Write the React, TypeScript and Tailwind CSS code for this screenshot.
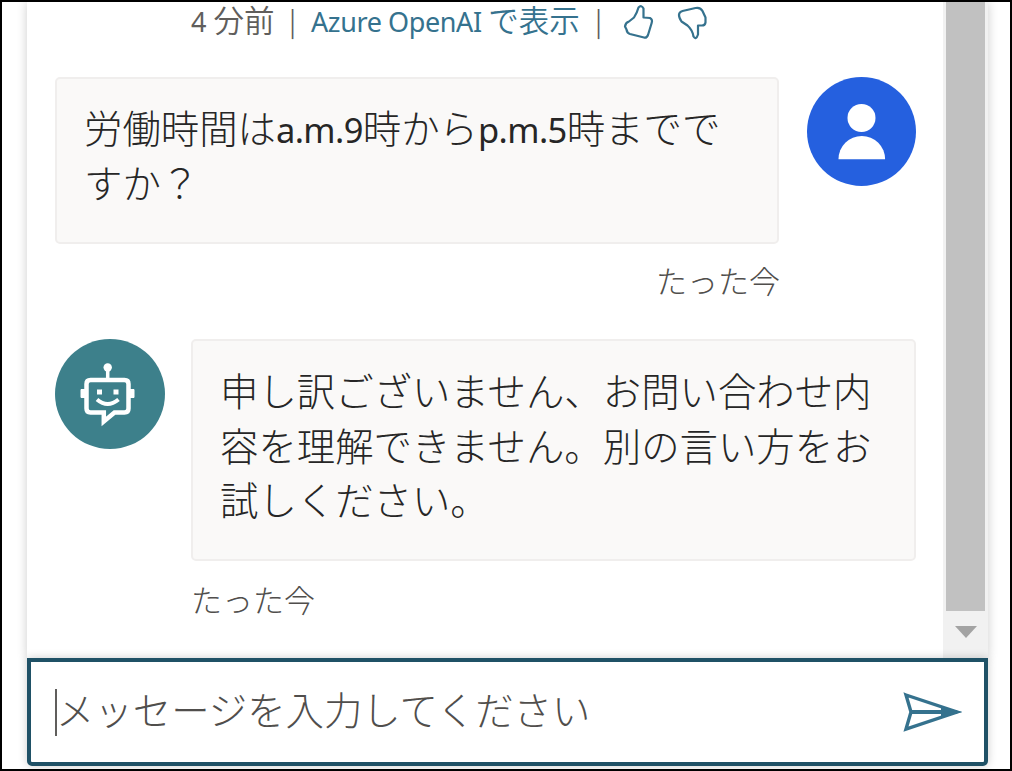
import type { ReactNode } from 'react';

const Latin = ({ children }: { children: ReactNode }) => (
  <span className="font-['Noto_Sans',sans-serif] font-normal text-[34.5px] leading-none tracking-[-0.6px]">{children}</span>
);

function UserAvatar() {
  return (
    <div className="size-[109px] shrink-0 rounded-full bg-[#2560df]">
      <svg viewBox="0 0 109 109" className="size-full" fill="#fff">
        <circle cx="54.5" cy="41" r="14" />
        <path d="M31.5 82.2a23.3 23.3 0 0 1 46.6 0z" />
      </svg>
    </div>
  );
}

function BotAvatar() {
  return (
    <div className="size-[110px] shrink-0 rounded-full bg-[#3d808b]">
      <svg viewBox="0 0 110 110" className="size-full" fill="none" stroke="#fff">
        <circle cx="52.7" cy="28.5" r="4.2" fill="#fff" stroke="none" />
        <path d="M52.7 30v11" strokeWidth="3.5" />
        <path d="M35.5 41H69.5q4 0 4 4V69.5q0 4-4 4H59.5L48.8 82.5V73.5H35.5q-4 0-4-4V45q0-4 4-4z" strokeWidth="4.5" />
        <path d="M26 50.5h4v8h-4zM75 50.5h4v8h-4z" fill="#fff" strokeWidth="1" />
        <path d="M42 50.5h5v5h-5zM58.5 50.5h5v5h-5z" fill="#fff" stroke="none" />
        <path d="M42 60.5q10.5 9 21.5 0" strokeWidth="4" />
      </svg>
    </div>
  );
}

function Feedback() {
  return (
    <svg width="90" height="38" viewBox="0 0 90 38" fill="none" stroke="#35728e" strokeWidth="2.2" strokeLinejoin="round" strokeLinecap="round">
      <path d="M18.5 5.5Q21.5 2.5 23.5 6.5V15.5L30 16Q33 17.5 31.500 21.5L28 33Q26.5 36.5 24 35.5L10 32Q7 31 6.5 27.5L5 24.5Q5.5 20.5 9 19.5L14 15.5Q17 11 18.5 5.5z" />
      <path d="M62.5 9L75.5 6Q80.5 5 82.5 9L85.5 15.5V20.5Q85 23.5 82 23.5H78V32.5Q76 38.5 73.5 34.5Q72.5 28 67.5 23.5L61.5 19.5Q56 11 62.5 9z" />
    </svg>
  );
}

export default function App() {
  return (
    <div className="flex h-[771px] w-[1012px] flex-col border-2 border-black bg-white pl-[25px] pr-[22px] font-['Noto_Sans_CJK_JP',sans-serif] font-light text-[#262626]">
      <div className="flex h-[656px] w-[961px] shadow-[0_0_10px_rgba(0,0,0,0.2)]">
        <div className="min-w-0 flex-1 pl-7 pr-[27px]">
          <div className="flex h-[75px] pl-[136px] text-[30.5px] font-[350] leading-[34px] text-[#605e5c] whitespace-pre">
            <span className="w-[98px]"><span className="font-['Noto_Sans'] font-normal text-[27px] leading-none">4 </span>分前</span>
            <span className="w-[22px] text-[27px] leading-[38px]">|</span>
            <a className="w-[284px] text-[#35728e]"><span className="font-['Noto_Sans'] font-normal text-[27px] leading-none tracking-[-0.4px]">Azure OpenAI </span>で表示</a>
            <span className="w-[25px] text-[27px] leading-[38px]">|</span>
            <Feedback />
          </div>
          <div className="flex justify-between">
            <div className="h-[167px] w-[724px] rounded-[5px] border-2 border-[#f0eeed] bg-[#faf9f8] px-[27px] pt-[20px] text-[38.4px] leading-[54.5px] whitespace-nowrap">
              労働時間は<Latin>a.m.9</Latin>時から<Latin>p.m.5</Latin>時までで<br />すか？
            </div>
            <UserAvatar />
          </div>
          <p className="h-[95px] w-[725px] pt-[13px] text-right text-[31px] leading-[46px] text-[#504e4c]">たった今</p>
          <div className="flex justify-between">
            <BotAvatar />
            <div className="h-[222px] w-[725px] rounded-[5px] border-2 border-[#f0eeed] bg-[#faf9f8] px-[27px] pt-[21px] text-[38.4px] leading-[54.5px] whitespace-nowrap">
              申し訳ございません、お問い合わせ内<br />容を理解できません。別の言い方をお<br />試しください。
            </div>
          </div>
          <p className="pl-[136px] pt-[15px] text-[31px] leading-[46px] text-[#504e4c]">たった今</p>
        </div>
        <div className="flex w-[45px] flex-col items-center bg-[#f1f1f1]">
          <div className="h-[609px] w-[39px] bg-[#c1c1c1]" />
          <svg width="22" height="12" viewBox="0 0 22 12" className="mt-[15px]" fill="#a3a3a3">
            <path d="M0 0h22L11 12z" />
          </svg>
        </div>
      </div>
      <div className="flex h-[108px] w-[961px] items-center justify-between rounded-b-[5px] border-4 border-[#1f5166] bg-white pl-6 pr-[21px] shadow-[0_0_10px_rgba(0,0,0,0.2)]">
        <div className="flex items-center">
          <div className="h-[47px] w-[2px] bg-[#605e5c]" />
          <span className="-ml-px pb-[8px] text-[38.4px] leading-[54px] text-[#504e4c]">メッセージを入力してください</span>
        </div>
        <svg width="60" height="42" viewBox="0 0 60 42" fill="none" stroke="#35728e" strokeWidth="3.4">
          <path d="M3 4L54 21L3 38L8 21z" />
          <path d="M8 21H54" strokeWidth="4" />
          <path d="M38 15.5L59 21L38 26.5z" fill="#35728e" stroke="none" />
        </svg>
      </div>
    </div>
  );
}
